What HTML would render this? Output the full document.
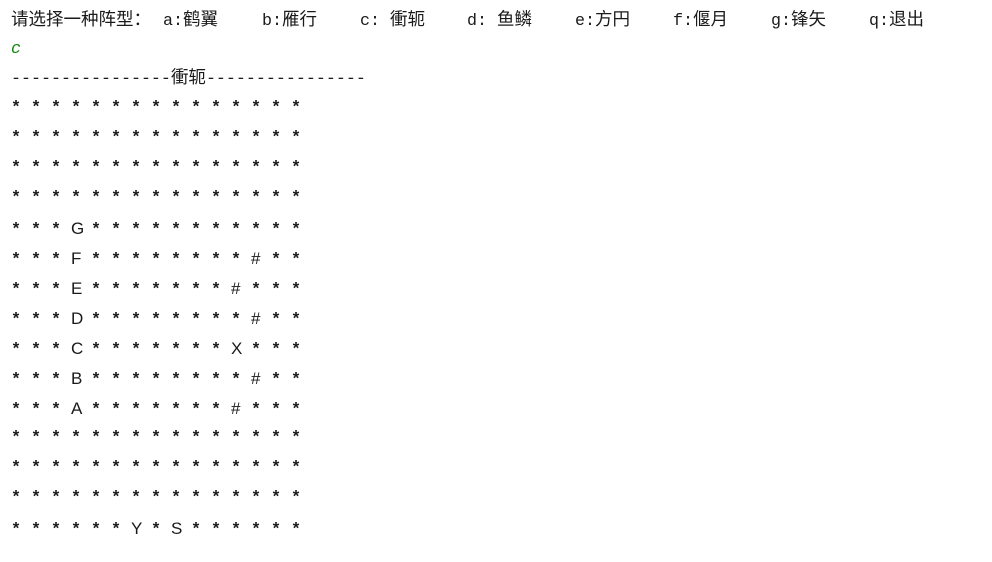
<!DOCTYPE html>
<html><head><meta charset="utf-8"><style>
html,body{margin:0;padding:0;background:#fff;width:992px;height:562px;overflow:hidden}
body{position:relative;color:#1a1a1a;font-family:"Liberation Mono","Noto Sans CJK SC",monospace;font-size:16.67px}
.a{position:absolute;white-space:pre;line-height:30px}
.cj{font-family:"Noto Sans CJK SC","WenQuanYi Zen Hei",sans-serif;font-size:17.5px}
.r{position:absolute;left:11px;height:30px;line-height:30px;white-space:nowrap;font-weight:bold}
.r i{display:inline-block;width:20px;font-style:normal}
.r b{display:inline-block;width:20px;font-weight:normal;font-family:"Liberation Sans",sans-serif;font-size:17px}
</style></head><body>
<div class="a" style="left:11px;top:4px"><span class="cj">请选择一种阵型：</span></div>
<div class="a" style="left:163px;top:4px">a:<span class="cj">鹤翼</span></div>
<div class="a" style="left:262px;top:4px">b:<span class="cj">雁行</span></div>
<div class="a" style="left:360px;top:4px">c: <span class="cj">衝轭</span></div>
<div class="a" style="left:467px;top:4px">d: <span class="cj">鱼鳞</span></div>
<div class="a" style="left:575px;top:4px">e:<span class="cj">方円</span></div>
<div class="a" style="left:673px;top:4px">f:<span class="cj">偃月</span></div>
<div class="a" style="left:771px;top:4px">g:<span class="cj">锋矢</span></div>
<div class="a" style="left:869px;top:4px">q:<span class="cj">退出</span></div>
<div class="a" style="left:11px;top:35px;color:#0a8a0a;font-style:italic">c</div>
<div class="a" style="left:11px;top:62px">----------------<span class="cj">衝轭</span>----------------</div>
<div class="r" style="top:94px"><i>*</i><i>*</i><i>*</i><i>*</i><i>*</i><i>*</i><i>*</i><i>*</i><i>*</i><i>*</i><i>*</i><i>*</i><i>*</i><i>*</i><i>*</i></div>
<div class="r" style="top:124px"><i>*</i><i>*</i><i>*</i><i>*</i><i>*</i><i>*</i><i>*</i><i>*</i><i>*</i><i>*</i><i>*</i><i>*</i><i>*</i><i>*</i><i>*</i></div>
<div class="r" style="top:154px"><i>*</i><i>*</i><i>*</i><i>*</i><i>*</i><i>*</i><i>*</i><i>*</i><i>*</i><i>*</i><i>*</i><i>*</i><i>*</i><i>*</i><i>*</i></div>
<div class="r" style="top:184px"><i>*</i><i>*</i><i>*</i><i>*</i><i>*</i><i>*</i><i>*</i><i>*</i><i>*</i><i>*</i><i>*</i><i>*</i><i>*</i><i>*</i><i>*</i></div>
<div class="r" style="top:214px"><i>*</i><i>*</i><i>*</i><b>G</b><i>*</i><i>*</i><i>*</i><i>*</i><i>*</i><i>*</i><i>*</i><i>*</i><i>*</i><i>*</i><i>*</i></div>
<div class="r" style="top:244px"><i>*</i><i>*</i><i>*</i><b>F</b><i>*</i><i>*</i><i>*</i><i>*</i><i>*</i><i>*</i><i>*</i><i>*</i><b>#</b><i>*</i><i>*</i></div>
<div class="r" style="top:274px"><i>*</i><i>*</i><i>*</i><b>E</b><i>*</i><i>*</i><i>*</i><i>*</i><i>*</i><i>*</i><i>*</i><b>#</b><i>*</i><i>*</i><i>*</i></div>
<div class="r" style="top:304px"><i>*</i><i>*</i><i>*</i><b>D</b><i>*</i><i>*</i><i>*</i><i>*</i><i>*</i><i>*</i><i>*</i><i>*</i><b>#</b><i>*</i><i>*</i></div>
<div class="r" style="top:334px"><i>*</i><i>*</i><i>*</i><b>C</b><i>*</i><i>*</i><i>*</i><i>*</i><i>*</i><i>*</i><i>*</i><b>X</b><i>*</i><i>*</i><i>*</i></div>
<div class="r" style="top:364px"><i>*</i><i>*</i><i>*</i><b>B</b><i>*</i><i>*</i><i>*</i><i>*</i><i>*</i><i>*</i><i>*</i><i>*</i><b>#</b><i>*</i><i>*</i></div>
<div class="r" style="top:394px"><i>*</i><i>*</i><i>*</i><b>A</b><i>*</i><i>*</i><i>*</i><i>*</i><i>*</i><i>*</i><i>*</i><b>#</b><i>*</i><i>*</i><i>*</i></div>
<div class="r" style="top:424px"><i>*</i><i>*</i><i>*</i><i>*</i><i>*</i><i>*</i><i>*</i><i>*</i><i>*</i><i>*</i><i>*</i><i>*</i><i>*</i><i>*</i><i>*</i></div>
<div class="r" style="top:454px"><i>*</i><i>*</i><i>*</i><i>*</i><i>*</i><i>*</i><i>*</i><i>*</i><i>*</i><i>*</i><i>*</i><i>*</i><i>*</i><i>*</i><i>*</i></div>
<div class="r" style="top:484px"><i>*</i><i>*</i><i>*</i><i>*</i><i>*</i><i>*</i><i>*</i><i>*</i><i>*</i><i>*</i><i>*</i><i>*</i><i>*</i><i>*</i><i>*</i></div>
<div class="r" style="top:514px"><i>*</i><i>*</i><i>*</i><i>*</i><i>*</i><i>*</i><b>Y</b><i>*</i><b>S</b><i>*</i><i>*</i><i>*</i><i>*</i><i>*</i><i>*</i></div>
</body></html>
